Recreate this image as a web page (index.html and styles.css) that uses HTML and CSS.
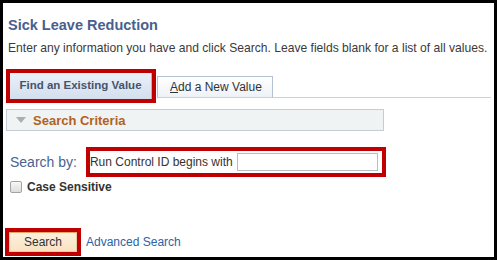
FILE: index.html
```html
<!DOCTYPE html>
<html lang="en">
<head>
    <meta charset="UTF-8">
    <title>Sick Leave Reduction</title>
    <link rel="stylesheet" href="styles.css">
</head>
<body>
    <div class="frame">
        <h1 class="page-title">Sick Leave Reduction</h1>
        <p class="instructions">Enter any information you have and click Search. Leave fields blank for a list of all values.</p>

        <div class="tabs">
            <div class="mark">
                <div class="tab tab-active">Find an Existing Value</div>
            </div>
            <div class="tab tab-other"><u>A</u>dd a New Value</div>
            <div class="tab-fill"></div>
        </div>

        <div class="criteria">
            <span class="tri"></span>
            <span class="criteria-title">Search Criteria</span>
        </div>

        <div class="search-row">
            <span class="search-by">Search by:</span>
            <div class="mark mark-field">
                <span class="field-label">Run Control ID begins with</span>
                <input type="text" class="field-input">
            </div>
        </div>

        <label class="case-row">
            <input type="checkbox" class="case-box">
            <span>Case Sensitive</span>
        </label>

        <div class="actions">
            <div class="mark mark-btn">
                <button class="btn-search">Search</button>
            </div>
            <a href="#" class="adv-link">Advanced Search</a>
        </div>
    </div>
</body>
</html>
```

FILE: styles.css
```css
body {
    margin: 0;
    background: #fff;
    font-family: "Liberation Sans", Arial, sans-serif;
    color: #333;
}
.frame {
    width: 497px;
    height: 260px;
    box-sizing: border-box;
    border: 3px solid #000;
    overflow: hidden;
}
.page-title {
    margin: 13px 0 0 5px;
    font-size: 14.5px;
    line-height: 18px;
    font-weight: bold;
    color: #48608e;
}
.instructions {
    margin: 7px 0 0 5px;
    font-size: 12.1px;
    line-height: 15px;
    color: #3a3a3a;
}

/* tabs */
.tabs {
    display: flex;
    align-items: flex-end;
    margin: 13px 0 0 3px;
}
.mark {
    border: 4px solid #c00000;
}
.tab {
    box-sizing: border-box;
    font-size: 12px;
    white-space: nowrap;
}
.tab-active {
    width: 142px;
    height: 26px;
    line-height: 25px;
    text-align: center;
    font-weight: bold;
    font-size: 11.5px;
    color: #46536a;
    background: linear-gradient(#e9f0f8, #d3dfed);
    border-right: 1px solid #a8b6c9;
}
.tab-other {
    margin: 0 0 5px 1px;
    width: 116px;
    height: 22px;
    line-height: 20px;
    padding-left: 12px;
    border: 1px solid #b3c1d3;
    border-bottom-color: #c7d3e2;
    background: linear-gradient(#fff, #eef2f7);
}
.tab-fill {
    flex: 1;
    margin: 0 3px 5px 0;
    border-bottom: 1px solid #c7d3e2;
}

/* search criteria bar */
.criteria {
    display: flex;
    align-items: center;
    box-sizing: border-box;
    width: 378px;
    height: 22px;
    margin: 6px 0 0 3px;
    background: #eff3f4;
    border: 1px solid #c6ccd1;
}
.tri {
    width: 0;
    height: 0;
    margin: 0 7px 0 9px;
    border-left: 5px solid transparent;
    border-right: 5px solid transparent;
    border-top: 6px solid #a9afb5;
}
.criteria-title {
    font-size: 13px;
    font-weight: bold;
    color: #b2621e;
}

/* search by */
.search-row {
    display: flex;
    align-items: center;
    margin: 16px 0 0 7px;
}
.search-by {
    font-size: 14px;
    color: #4a6390;
    margin-right: 9px;
}
.mark-field {
    display: flex;
    align-items: center;
    width: 292px;
    height: 22px;
}
.field-label {
    font-size: 12px;
}
.field-input {
    box-sizing: border-box;
    width: 141px;
    height: 18px;
    margin: 0 4px 0 auto;
    border: 1px solid #bcbcbc;
    padding: 0;
}

.case-row {
    display: flex;
    align-items: center;
    margin: 2px 0 0 7px;
    height: 16px;
    font-size: 12px;
    font-weight: bold;
}
.case-box {
    appearance: none;
    -webkit-appearance: none;
    box-sizing: border-box;
    width: 12px;
    height: 12px;
    margin: 0 5px 0 0;
    border: 1px solid #a3a3a3;
    border-radius: 2px;
    background: linear-gradient(#f7f7f7, #dedede);
}

/* bottom buttons */
.actions {
    display: flex;
    align-items: center;
    margin: 33px 0 0 2px;
}
.mark-btn {
    height: 20px;
}
.btn-search {
    display: block;
    box-sizing: border-box;
    width: 68px;
    height: 20px;
    padding: 0;
    font-family: inherit;
    font-size: 12px;
    color: #333;
    background: linear-gradient(#fdf1df, #f9e2c2);
    border: 1px solid #e6cba6;
    border-top-color: #e7a666;
}
.adv-link {
    margin-left: 5px;
    font-size: 12px;
    color: #2c62a8;
    text-decoration: none;
}
```
